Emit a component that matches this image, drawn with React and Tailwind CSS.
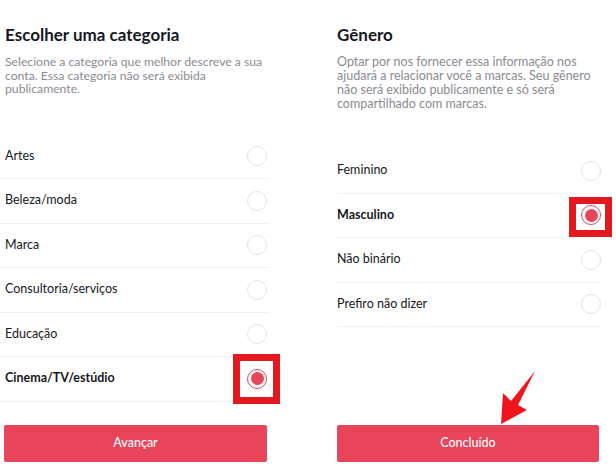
import React from "react";

const font = { fontFamily: "Lato, 'Noto Sans', sans-serif" };

function Radio({ selected, box }) {
  return (
    <div className="relative w-[20px] h-[20px] shrink-0">
      {box === "left" && (
        <div className="absolute left-[-14px] top-[-15px] w-[47px] h-[50px] border-[7px] border-[#e3191f]" />
      )}
      {box === "right" && (
        <div className="absolute left-[-12px] top-[-8px] w-[43px] h-[40px] border-[7px] border-[#e3191f]" />
      )}
      {selected ? (
        <div className="relative w-[20px] h-[20px] rounded-full border-[1.5px] border-[#e8445a] flex items-center justify-center bg-white">
          <div className="w-[13px] h-[13px] rounded-full bg-[#e8445a]" />
        </div>
      ) : (
        <div className="relative w-[20px] h-[20px] rounded-full border border-[#e3e3e5] bg-white" />
      )}
    </div>
  );
}

function Row({ label, selected, box, pl, pr }) {
  return (
    <div className={`flex items-center justify-between h-[44.5px] border-b border-[#f1f1f2] ${pr} ${pl}`}>
      <span className={`text-[12.5px] text-[#161823] ${selected ? "font-bold" : ""}`}>{label}</span>
      <Radio selected={selected} box={box} />
    </div>
  );
}

export default function App() {
  const left = ["Artes", "Beleza/moda", "Marca", "Consultoria/serviços", "Educação", "Cinema/TV/estúdio"];
  const right = ["Feminino", "Masculino", "Não binário", "Prefiro não dizer"];
  return (
    <div className="relative w-[616px] h-[476px] bg-white overflow-hidden flex" style={font}>
      {/* Left panel */}
      <div className="w-[270px] flex flex-col">
        <h1 className="pl-[5px] mt-[25px] text-[17px] leading-[20px] font-bold text-[#161823]">Escolher uma categoria</h1>
        <p className="pl-[5px] mt-[10px] text-[12.2px] leading-[13.5px] text-[#8a8b91]">
          Selecione a categoria que melhor descreve a sua conta. Essa categoria não será exibida publicamente.
        </p>
        <div className="mt-[39px] flex flex-col">
          {left.map((l) => (
            <Row key={l} label={l} pl="pl-[5px]" pr="pr-[3px]" selected={l === "Cinema/TV/estúdio"} box={l === "Cinema/TV/estúdio" ? "left" : null} />
          ))}
        </div>
        <div className="mt-[23px] ml-[4px] w-[263px] h-[37px] rounded-[2px] bg-[#e8445a] flex items-center justify-center text-white text-[12.5px] font-medium">
          Avançar
        </div>
      </div>
      {/* Right panel */}
      <div className="ml-[67px] w-[264px] flex flex-col">
        <h1 className="mt-[25px] text-[17px] leading-[20px] font-bold text-[#161823]">Gênero</h1>
        <p className="mt-[10px] text-[12.5px] leading-[14px] text-[#8a8b91]">
          Optar por nos fornecer essa informação nos ajudará a relacionar você a marcas. Seu gênero não será exibido publicamente e só será compartilhado com marcas.
        </p>
        <div className="mt-[38px] flex flex-col">
          {right.map((l) => (
            <Row key={l} label={l} pl="" pr="pr-0" selected={l === "Masculino"} box={l === "Masculino" ? "right" : null} />
          ))}
        </div>
        <div className="mt-[98px] w-[262px] h-[37px] rounded-[2px] bg-[#e8445a] flex items-center justify-center text-white text-[12.5px] font-medium">
          Concluído
        </div>
      </div>
      <svg className="absolute left-0 top-0 pointer-events-none" width="616" height="476" viewBox="0 0 616 476">
        <polygon points="501,424 503,393 511,401 535,371 518,405 527,410" fill="#f0141c" />
      </svg>
    </div>
  );
}
